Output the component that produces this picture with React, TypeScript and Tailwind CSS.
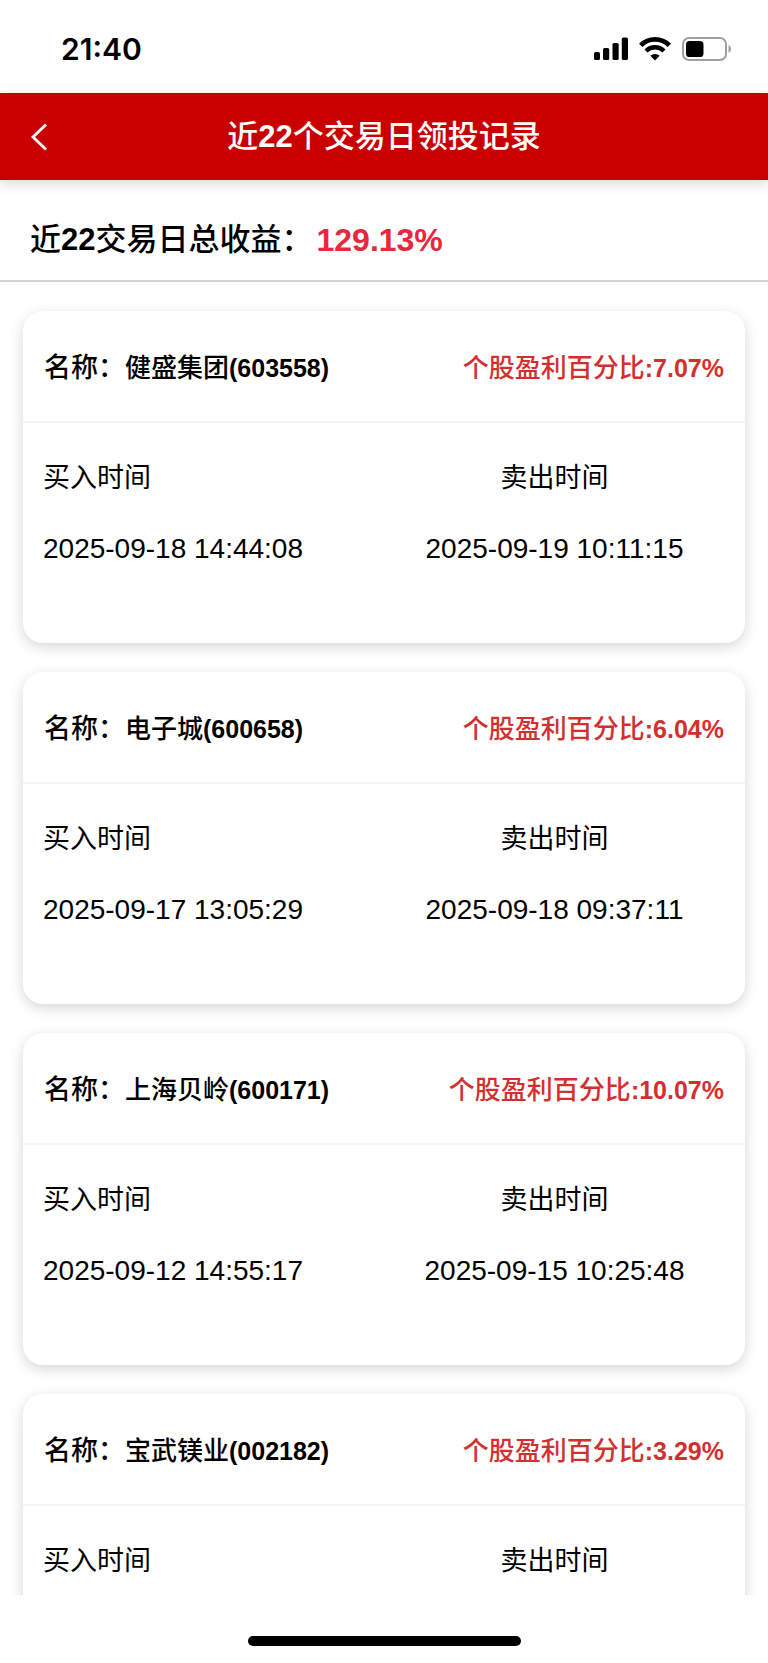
import React from 'react';

interface TradeRecord {
  name: string;
  code: string;
  profit: string;
  buyTime?: string;
  sellTime?: string;
}

const records: TradeRecord[] = [
  { name: '健盛集团', code: '603558', profit: '7.07%', buyTime: '2025-09-18 14:44:08', sellTime: '2025-09-19 10:11:15' },
  { name: '电子城', code: '600658', profit: '6.04%', buyTime: '2025-09-17 13:05:29', sellTime: '2025-09-18 09:37:11' },
  { name: '上海贝岭', code: '600171', profit: '10.07%', buyTime: '2025-09-12 14:55:17', sellTime: '2025-09-15 10:25:48' },
  { name: '宝武镁业', code: '002182', profit: '3.29%' },
];

const StatusBar: React.FC = () => (
  <div className="flex h-[93px] shrink-0 items-center justify-between pt-1 pr-9 pl-[61px]">
    <span className="font-['Inter',sans-serif] text-[30px] leading-10 font-semibold">21:40</span>
    <div className="flex items-center gap-[11px]">
      <svg width="34" height="24" viewBox="0 0 34 24" aria-hidden="true">
        <rect x="0" y="15" width="6" height="8" rx="1.6" />
        <rect x="9" y="11" width="6.2" height="12" rx="1.6" />
        <rect x="18.5" y="6" width="6.2" height="17" rx="1.6" />
        <rect x="27.8" y="0.6" width="6.2" height="22.4" rx="1.6" />
      </svg>
      <svg width="32" height="24" viewBox="0 0 32 24" aria-hidden="true">
        <path d="M1.7 8.3a20.2 20.2 0 0 1 28.6 0" fill="none" stroke="#000" strokeWidth="4.6" />
        <path d="M7 14a12.8 12.8 0 0 1 18 0" fill="none" stroke="#000" strokeWidth="4.4" />
        <path d="M11.3 18.7a7 7 0 0 1 9.4 0L16 23.6z" />
      </svg>
      <svg width="50" height="24" viewBox="0 0 50 24" aria-hidden="true">
        <rect x="1" y="1" width="43" height="22" rx="6" fill="none" stroke="#a0a0a0" strokeWidth="2" />
        <rect x="4" y="4" width="17.5" height="16" rx="3.6" />
        <path d="M46.5 8.2c3.4 1.2 3.4 6.4 0 7.6z" fill="#a0a0a0" />
      </svg>
    </div>
  </div>
);

const RecordCard: React.FC<{ record: TradeRecord }> = ({ record }) => (
  <article className="rounded-[20px] bg-white pb-[58px] shadow-[0_4px_14px_rgba(0,0,0,0.16)]">
    <div className="flex h-28 items-center justify-between border-b-2 border-[#f5f5f5] px-[21px] pt-1 font-medium">
      <h2 className="text-[26px]">
        <span className="text-[27px]">名称：</span>
        {record.name}
        <span className="text-[25px] font-bold">({record.code})</span>
      </h2>
      <p className="text-[26px] text-[#d32f2f]">
        个股盈利百分比<span className="text-[25px] font-bold">:{record.profit}</span>
      </p>
    </div>
    <div className="px-5 pt-5">
      <table className="w-full table-fixed text-[28px]">
        <thead>
          <tr className="h-[70px]">
            <th className="text-left text-[27px] font-normal">买入时间</th>
            <th className="text-center text-[27px] font-normal">卖出时间</th>
          </tr>
        </thead>
        <tbody>
          <tr className="h-[72px]">
            <td className="text-left">{record.buyTime}</td>
            <td className="text-center">{record.sellTime}</td>
          </tr>
        </tbody>
      </table>
    </div>
  </article>
);

export default function App() {
  return (
    <div className="flex h-screen flex-col bg-white font-['Liberation_Sans','Noto_Sans_CJK_SC',sans-serif] text-black">
      <StatusBar />

      <header className="z-10 grid h-[87px] shrink-0 grid-cols-[80px_1fr_80px] items-center bg-[#c90000] text-white shadow-[0_4px_12px_rgba(0,0,0,0.15)]">
        <button type="button" aria-label="返回" className="flex h-full items-center pl-[30px]">
          <svg width="18" height="28" viewBox="0 0 18 28" aria-hidden="true">
            <path d="M16 1.5 3 14l13 12.5" fill="none" stroke="#fff" strokeWidth="2.8" />
          </svg>
        </button>
        <h1 className="pt-0.5 text-center text-[31px] font-medium">
          近<span className="font-bold">22</span>个交易日领投记录
        </h1>
      </header>

      <main className="flex-1 overflow-y-auto [scrollbar-width:none]">
        <div className="flex h-[102px] items-center gap-1 border-b-2 border-[#d3d3d3] px-[30px] pt-5 text-[31px] font-medium">
          <span>
            近<span className="font-bold">22</span>交易日总收益：
          </span>
          <span className="text-[32px] font-bold text-[#e5283c]">129.13%</span>
        </div>

        <div className="flex flex-col gap-[29px] px-[23px] py-[29px]">
          {records.map((record) => (
            <RecordCard key={record.code} record={record} />
          ))}
        </div>
      </main>

      {/* home indicator */}
      <footer className="flex h-[68px] shrink-0 items-end justify-center bg-white pb-[17px]">
        <div className="h-2.5 w-[273px] rounded-full bg-black" />
      </footer>
    </div>
  );
}
